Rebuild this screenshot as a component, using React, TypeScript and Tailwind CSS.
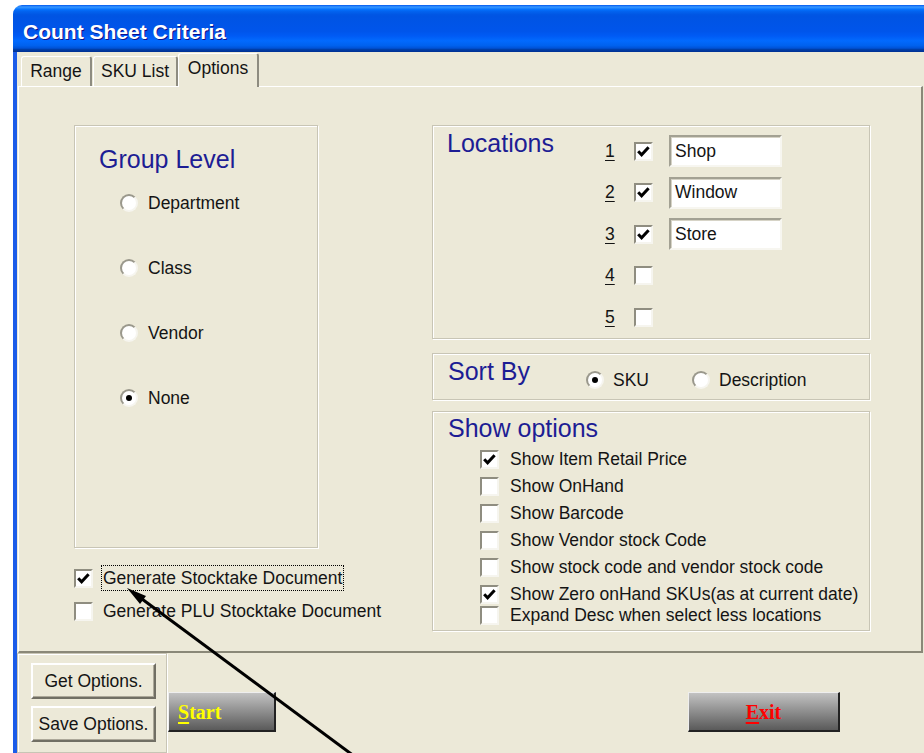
import React from "react";

// XP style title bar gradient
const titleBar =
  "bg-[linear-gradient(180deg,#0058ee_0%,#3593ff_4%,#288eff_6%,#127dff_8%,#036ffc_10%,#0262ee_14%,#0057e5_20%,#0054e3_24%,#0055eb_56%,#005bf5_66%,#026afe_76%,#0062ef_86%,#0052d6_92%,#0040ab_94%,#003092_100%)]";

const etched =
  "border border-[#c8c5b5] shadow-[inset_1px_1px_0_#ffffff,1px_1px_0_#ffffff]";

const Check: React.FC<{ checked?: boolean }> = ({ checked }) => (
  <span className="w-[19px] h-[19px] shrink-0 bg-white border-2 border-t-[#8f8d80] border-l-[#8f8d80] border-r-[#f6f5ef] border-b-[#f6f5ef] flex items-center justify-center">
    {checked && (
      <svg width="15" height="15" viewBox="0 0 15 15">
        <path d="M2.2 7.2 L5.6 10.8 L12.6 3.2" fill="none" stroke="#000" strokeWidth="3" />
      </svg>
    )}
  </span>
);

const Radio: React.FC<{ on?: boolean }> = ({ on }) => (
  <span className="w-[18px] h-[18px] shrink-0 rounded-full bg-white border-2 border-t-[#9a988c] border-l-[#9a988c] border-r-[#f6f5ef] border-b-[#f6f5ef] flex items-center justify-center">
    {on && <span className="w-[6px] h-[6px] rounded-full bg-black" />}
  </span>
);

const Tab: React.FC<{ label: string; width: string; active?: boolean }> = ({ label, width, active }) => (
  <div
    className={
      "border-t border-l border-white border-r-2 border-r-[#8e8c80] rounded-t-[3px] flex items-center justify-center " +
      width +
      (active ? " h-[34px] -mb-px relative z-10 bg-[#ece9d8] pb-[4px]" : " h-[30px]")
    }
  >
    {label}
  </div>
);

const locations = [
  { n: "1", on: true, name: "Shop" },
  { n: "2", on: true, name: "Window" },
  { n: "3", on: true, name: "Store" },
  { n: "4", on: false, name: null },
  { n: "5", on: false, name: null },
];

const showOptions = [
  { label: "Show Item Retail Price", on: true },
  { label: "Show OnHand", on: false },
  { label: "Show Barcode", on: false },
  { label: "Show Vendor stock Code", on: false },
  { label: "Show stock code and vendor stock code", on: false },
  { label: "Show Zero onHand SKUs(as at current date)", on: true },
  { label: "Expand Desc when select less locations", on: false, tight: true },
];

const groupLevels = [
  { label: "Department", on: false },
  { label: "Class", on: false },
  { label: "Vendor", on: false },
  { label: "None", on: true },
];

const App: React.FC = () => {
  return (
    <div className="w-[924px] h-[753px] bg-white overflow-hidden relative font-['Liberation_Sans',Arial,sans-serif] text-[17.5px] text-[#141414]">
      <div className="ml-[13px] mt-[5px] w-[911px] h-[748px] flex flex-col">
        {/* title bar */}
        <div className={"h-[47px] rounded-tl-[9px] flex items-center pl-[10px] pt-[6px] " + titleBar}>
          <span className="text-white font-bold text-[21px] [text-shadow:1px_1px_#0f1089]">
            Count Sheet Criteria
          </span>
        </div>

        {/* window body */}
        <div className="flex-1 bg-[#ece9d8] border-l-4 border-l-[#1b5ce9] flex flex-col">
          {/* tabs */}
          <div className="h-[34px] flex items-end pl-[4px]">
            <Tab label="Range" width="w-[71px]" />
            <Tab label="SKU List" width="w-[85px] ml-px" />
            <Tab label="Options" width="w-[81px]" active />
          </div>

          {/* tab page */}
          <div className="ml-px w-[905px] h-[567px] border-t border-l border-white border-r-2 border-b-2 border-r-[#8a8878] border-b-[#8a8878] pt-[38px] pl-[55px] flex gap-[114px]">
            {/* left column */}
            <div className="w-[244px] flex flex-col">
              <div className={"h-[423px] " + etched}>
                <div className="pl-[24px] pt-[19px] text-[25px] leading-[29px] text-[#1d1d94]">Group Level</div>
                <div className="mt-[17px] pl-[45px] flex flex-col gap-[41px]">
                  {groupLevels.map((g) => (
                    <div key={g.label} className="h-[24px] flex items-center gap-[10px]">
                      <Radio on={g.on} />
                      <span>{g.label}</span>
                    </div>
                  ))}
                </div>
              </div>

              <div className="mt-[17px] flex flex-col gap-[7px] whitespace-nowrap">
                <div className="h-[26px] flex items-center">
                  <Check checked />
                  <span className="ml-[8px] h-[26px] px-px border border-dotted border-black flex items-center">
                    Generate Stocktake Document
                  </span>
                </div>
                <div className="h-[26px] flex items-center">
                  <Check />
                  <span className="ml-[8px] px-px border border-transparent">Generate PLU Stocktake Document</span>
                </div>
              </div>
            </div>

            {/* right column */}
            <div className="w-[438px] flex flex-col">
              <div className={"h-[214px] flex " + etched}>
                <div className="w-[172px] pl-[14px] pt-[3px] text-[25px] leading-[29px] text-[#1d1d94]">Locations</div>
                <div className="pt-[9px] flex flex-col gap-[9.5px]">
                  {locations.map((l) => (
                    <div key={l.n} className="h-[32px] flex items-center">
                      <span className="w-[29px] underline underline-offset-[3px]">{l.n}</span>
                      <Check checked={l.on} />
                      {l.name && (
                        <div className="ml-[16px] w-[113px] h-[32px] bg-white border-2 border-t-[#a3a193] border-l-[#a3a193] border-r-[#f7f6f0] border-b-[#f7f6f0] shadow-[inset_1px_1px_0_#d6d3c6] pl-[4px] flex items-center">
                          {l.name}
                        </div>
                      )}
                    </div>
                  ))}
                </div>
              </div>

              <div className={"mt-[14px] h-[47px] flex " + etched}>
                <div className="w-[153px] pl-[15px] pt-[3px] text-[25px] leading-[29px] text-[#1d1d94]">Sort By</div>
                <div className="pt-[17px] flex">
                  <div className="w-[106px] h-[18px] flex items-center gap-[9px]">
                    <Radio on />
                    <span>SKU</span>
                  </div>
                  <div className="h-[18px] flex items-center gap-[9px]">
                    <Radio />
                    <span>Description</span>
                  </div>
                </div>
              </div>

              <div className={"mt-[11px] h-[220px] " + etched}>
                <div className="pl-[15px] pt-[2px] text-[25px] leading-[29px] text-[#1d1d94]">Show options</div>
                <div className="mt-[6px] pl-[47px] flex flex-col gap-[6px]">
                  {showOptions.map((o) => (
                    <div key={o.label} className={"h-[21px] flex items-center" + (o.tight ? " -mt-[6px]" : "")}>
                      <Check checked={o.on} />
                      <span className="ml-[11px] leading-[21px]">{o.label}</span>
                    </div>
                  ))}
                </div>
              </div>
            </div>
          </div>

          {/* bottom button strip */}
          <div className="flex-1 flex">
            <div className={"w-[150px] pt-[9px] pl-[13px] flex flex-col gap-[7px] " + etched}>
              {["Get Options.", "Save Options."].map((b) => (
                <div
                  key={b}
                  className="w-[125px] h-[36px] border-2 border-t-white border-l-white border-r-[#716f64] border-b-[#716f64] shadow-[inset_-1px_-1px_0_#aca899] flex items-center justify-center"
                >
                  {b}
                </div>
              ))}
            </div>

            <div className="ml-px mt-[39px] w-[108px] h-[40px] bg-[linear-gradient(180deg,#c2c2c2,#5a5a5a)] border-t border-l border-[#eeeeee] border-r-2 border-b-2 border-r-[#222] border-b-[#222] pl-[9px] flex items-center font-['Liberation_Serif',serif] font-bold text-[20px] text-[#ffff00]">
              <span className="underline underline-offset-[3px]">S</span>tart
            </div>

            <div className="ml-[412px] mt-[39px] w-[152px] h-[40px] bg-[linear-gradient(180deg,#c2c2c2,#5a5a5a)] border-t border-l border-[#eeeeee] border-r-2 border-b-2 border-r-[#222] border-b-[#222] flex items-center justify-center font-['Liberation_Serif',serif] font-bold text-[20px] text-[#ff0000]">
              <span className="underline underline-offset-[3px]">E</span>xit
            </div>
          </div>
        </div>
      </div>

      {/* callout arrow */}
      <svg className="absolute inset-0 pointer-events-none" width="924" height="753" viewBox="0 0 924 753">
        <line x1="142" y1="599" x2="354" y2="756" stroke="#000" strokeWidth="3" />
        <polygon points="127,588 140,604 146,596" fill="#000" />
      </svg>
    </div>
  );
};

export default App;
